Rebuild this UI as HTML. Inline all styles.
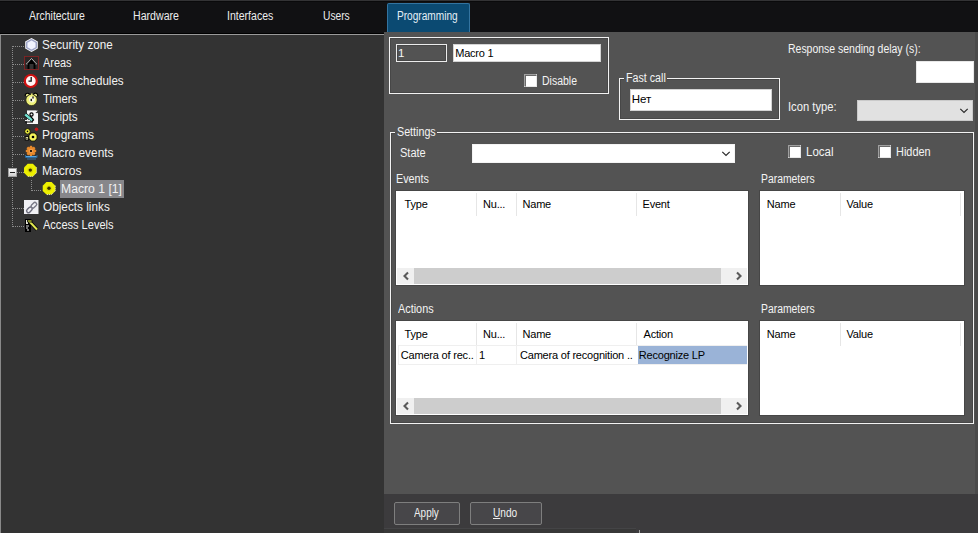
<!DOCTYPE html>
<html><head><meta charset="utf-8">
<style>
*{box-sizing:border-box;margin:0;padding:0}
html,body{width:978px;height:533px;overflow:hidden;background:#111113;font-family:"Liberation Sans",sans-serif;position:relative}
.a{position:absolute}
.t{position:absolute;white-space:nowrap;line-height:1}
.gb{position:absolute;border:1px solid #f2f2f2;box-shadow:inset 0 0 0 1px #474747}
.inp{position:absolute;background:#fff;border:1px solid #d4d4d4}
.list{position:absolute;background:#fff;box-shadow:0 0 0 1px #464646}
.sep{position:absolute;width:1px;background:#e6e6e6}
.gl{position:absolute;background:#efefef}
.dotv{position:absolute;width:1px;background:repeating-linear-gradient(to bottom,#8c8c8c 0 1px,transparent 1px 2px)}
.doth{position:absolute;height:1px;background:repeating-linear-gradient(to right,#8c8c8c 0 1px,transparent 1px 2px)}
.sb{position:absolute;height:16px;background:#f0f0f0}
.th{position:absolute;top:0;height:16px;background:#cdcdcd}
.chk{position:absolute;width:13px;height:13px;background:#fff;border-style:solid;border-width:1px;border-color:#a0a0a0 #fff #fff #a0a0a0}
.chk:after{content:"";position:absolute;left:0;top:0;width:10px;height:10px;border-style:solid;border-width:1px;border-color:#6a6a6a #e8e8e8 #e8e8e8 #6a6a6a}
.btn{position:absolute;border:1px solid #7e7e7e;border-radius:2px;background:#474649}
svg{position:absolute;overflow:visible}
</style></head><body>
<!-- top bar -->
<div class="a" style="left:0;top:0;width:978px;height:1px;background:#333335"></div>
<div class="a" style="left:0;top:1px;width:978px;height:1px;background:#0a0a0b"></div>
<div class="a" style="left:0;top:33px;width:384px;height:1px;background:#000"></div>
<div class="t" style="left:29.00px;top:10px;font-size:12px;color:#ececec;transform:scaleX(0.8734);transform-origin:0 0;">Architecture</div>
<div class="t" style="left:133.12px;top:10px;font-size:12px;color:#ececec;transform:scaleX(0.8843);transform-origin:0 0;">Hardware</div>
<div class="t" style="left:227.42px;top:10px;font-size:12px;color:#ececec;transform:scaleX(0.8788);transform-origin:0 0;">Interfaces</div>
<div class="t" style="left:322.85px;top:10px;font-size:12px;color:#ececec;transform:scaleX(0.8533);transform-origin:0 0;">Users</div>
<div class="a" style="left:387px;top:3px;width:83px;height:30px;background:#0b4a72;border:1px solid #3374a0;border-bottom:none;border-radius:2px 2px 0 0"></div>
<div class="t" style="left:397.46px;top:10px;font-size:12px;color:#e4eef6;transform:scaleX(0.8423);transform-origin:0 0;">Programming</div>

<!-- tree panel -->
<div class="a" style="left:0;top:34px;width:384px;height:499px;background:#333333;border-top:1px solid #9a9a9a;border-left:1px solid #8a8a8a"></div>
<div class="dotv" style="left:12px;top:46px;height:181px"></div>
<div class="doth" style="left:13px;top:46px;width:11px"></div>
<div class="doth" style="left:13px;top:64px;width:11px"></div>
<div class="doth" style="left:13px;top:82px;width:11px"></div>
<div class="doth" style="left:13px;top:100px;width:11px"></div>
<div class="doth" style="left:13px;top:118px;width:11px"></div>
<div class="doth" style="left:13px;top:136px;width:11px"></div>
<div class="doth" style="left:13px;top:154px;width:11px"></div>
<div class="doth" style="left:17px;top:172px;width:7px"></div>
<div class="doth" style="left:13px;top:208px;width:11px"></div>
<div class="doth" style="left:13px;top:226px;width:11px"></div>
<div class="dotv" style="left:31px;top:180px;height:11px"></div>
<div class="doth" style="left:32px;top:190px;width:10px"></div>
<div class="a" style="left:8px;top:168px;width:9px;height:9px;background:linear-gradient(#fafafa,#d0d0d0);border:1px solid #a0a0a0"></div>
<div class="a" style="left:10px;top:172px;width:5px;height:1px;background:#222"></div>
<div class="a" style="left:60px;top:180px;width:64px;height:18px;background:#87878b"></div>
<div class="t" style="left:42.07px;top:39px;font-size:12.5px;color:#f2f2f2;transform:scaleX(0.9333);transform-origin:0 0;">Security zone</div>
<div class="t" style="left:43.00px;top:57px;font-size:12.5px;color:#f2f2f2;transform:scaleX(0.8727);transform-origin:0 0;">Areas</div>
<div class="t" style="left:43.00px;top:75px;font-size:12.5px;color:#f2f2f2;transform:scaleX(0.9264);transform-origin:0 0;">Time schedules</div>
<div class="t" style="left:43.00px;top:93px;font-size:12.5px;color:#f2f2f2;transform:scaleX(0.9079);transform-origin:0 0;">Timers</div>
<div class="t" style="left:42.07px;top:111px;font-size:12.5px;color:#f2f2f2;transform:scaleX(0.9324);transform-origin:0 0;">Scripts</div>
<div class="t" style="left:42.04px;top:129px;font-size:12.5px;color:#f2f2f2;transform:scaleX(0.9585);transform-origin:0 0;">Programs</div>
<div class="t" style="left:42.05px;top:147px;font-size:12.5px;color:#f2f2f2;transform:scaleX(0.9541);transform-origin:0 0;">Macro events</div>
<div class="t" style="left:42.03px;top:165px;font-size:12.5px;color:#f2f2f2;transform:scaleX(0.9650);transform-origin:0 0;">Macros</div>
<div class="t" style="left:61.32px;top:183px;font-size:12.5px;color:#f2f2f2;transform:scaleX(0.9754);transform-origin:0 0;">Macro 1 [1]</div>
<div class="t" style="left:43.00px;top:201px;font-size:12.5px;color:#f2f2f2;transform:scaleX(0.9423);transform-origin:0 0;">Objects links</div>
<div class="t" style="left:43.00px;top:219px;font-size:12.5px;color:#f2f2f2;transform:scaleX(0.8825);transform-origin:0 0;">Access Levels</div>
<!-- icons -->
<svg style="left:24px;top:37px" width="16" height="16" viewBox="0 0 16 16">
 <polygon points="7.5,1 13.8,4.6 13.8,11.4 7.5,15 1.2,11.4 1.2,4.6" fill="#fff"/>
 <polygon points="7.5,2.6 12.3,5.4 12.3,10.6 7.5,13.4 2.7,10.6 2.7,5.4" fill="#f2f4ff" stroke="#a0a6c8" stroke-width="1.5"/>
</svg>
<svg style="left:24px;top:55px" width="16" height="16" viewBox="0 0 16 16">
 <rect x="0.5" y="1.5" width="14" height="13" fill="#2c2828" stroke="#c81c1c" stroke-width="1.1" stroke-dasharray="1 1"/>
 <polygon points="2.5,9 7.5,3.5 12.5,9" fill="#000" stroke="#e8e8e8" stroke-width="0.8"/>
 <rect x="3.5" y="8" width="8" height="6" fill="#000"/>
 <rect x="5.5" y="9" width="4" height="5" fill="#333"/>
</svg>
<svg style="left:24px;top:73px" width="16" height="16" viewBox="0 0 16 16">
 <circle cx="6.8" cy="8" r="6" fill="#fff4f4" stroke="#d01010" stroke-width="2.2"/>
 <path d="M7.2,4 V8.2 H4.5" stroke="#111" stroke-width="1.3" fill="none"/>
</svg>
<svg style="left:24px;top:91px" width="16" height="16" viewBox="0 0 16 16">
 <path d="M1.5,5.5 A2.2,2.2 0 0 1 5.5,3.5" stroke="#000" stroke-width="1.2" fill="#f0f090"/>
 <path d="M9.5,3.5 A2.2,2.2 0 0 1 13.5,5.5" stroke="#000" stroke-width="1.2" fill="#f0f090"/>
 <circle cx="7.5" cy="9" r="5.6" fill="#eef07a" stroke="#1a1a00" stroke-width="0.6"/>
 <circle cx="8" cy="8.5" r="3" fill="#fafadc"/>
 <rect x="7" y="2.5" width="1.6" height="1.6" fill="#e0e070"/>
 <rect x="8.4" y="5.4" width="1.2" height="2.2" fill="#000"/>
 <rect x="6.6" y="7.8" width="1.3" height="2.3" fill="#000"/>
</svg>
<svg style="left:24px;top:109px" width="16" height="16" viewBox="0 0 16 16">
 <rect x="3" y="1.4" width="11" height="13.6" fill="#f6f6f6"/>
 <path d="M12.2,1.5 L14,1.5 L14,3.5 Z" fill="#222"/>
 <path d="M11.8,3.6 H14" stroke="#000" stroke-width="0.8"/>
 <path d="M1.2,5.5 L8.5,11.5" stroke="#000" stroke-width="3.6"/>
 <path d="M1.2,5.5 L8.5,11.5" stroke="#70e0d0" stroke-width="2.4"/>
 <path d="M1,11.6 H6" stroke="#f0f0f0" stroke-width="1.2"/>
 <path d="M1,13 H9" stroke="#000" stroke-width="1"/>
 <circle cx="7.5" cy="5.5" r="1.6" fill="#f6f6f6" stroke="#000" stroke-width="1.2"/>
 <path d="M6.5,7 L9.5,11 L8,12.5" stroke="#000" stroke-width="1.2" fill="none"/>
</svg>
<svg style="left:24px;top:127px" width="16" height="16" viewBox="0 0 16 16">
 <circle cx="12.5" cy="2.2" r="1.7" fill="#c81818"/>
 <circle cx="3.5" cy="4.4" r="2.8" fill="#f0f040" stroke="#000" stroke-width="0.9"/>
 <circle cx="3.5" cy="4.4" r="0.8" fill="#000"/>
 <circle cx="9" cy="10" r="4.2" fill="#f4f45a" stroke="#000" stroke-width="0.9"/>
 <circle cx="9" cy="10" r="1.3" fill="#000"/>
 <rect x="1.2" y="9.6" width="3.4" height="3.4" fill="#f0f0b0" stroke="#000" stroke-width="0.9"/>
 <circle cx="2.9" cy="11.3" r="0.6" fill="#000"/>
</svg>
<svg style="left:24px;top:145px" width="16" height="16" viewBox="0 0 16 16">
 <g fill="#e8892a">
  <circle cx="7" cy="6" r="4"/>
  <rect x="5.8" y="0.8" width="2.4" height="10.4"/>
  <rect x="1.8" y="4.8" width="10.4" height="2.4"/>
  <rect x="5.8" y="0.8" width="2.4" height="10.4" transform="rotate(45 7 6)"/>
  <rect x="5.8" y="0.8" width="2.4" height="10.4" transform="rotate(-45 7 6)"/>
 </g>
 <circle cx="7" cy="6" r="2.2" fill="#f0a050"/>
 <circle cx="7" cy="6" r="1.1" fill="#000"/>
 <path d="M1.5,10 V12.5 H13 V10" stroke="#2a6aa0" stroke-width="1" fill="none"/>
 <path d="M2,11.5 H12.5" stroke="#5aa8e0" stroke-width="1"/>
 <path d="M3,14 H12" stroke="#3a80b8" stroke-width="0.8"/>
</svg>
<svg style="left:24px;top:163px" width="16" height="16" viewBox="0 0 16 16">
 <polygon points="12.58,9.70 8.90,13.38 3.70,13.38 0.02,9.70 0.02,4.50 3.70,0.82 8.90,0.82 12.58,4.50" fill="#eef000"/>
 <path d="M12.56,4.52 L12.56,9.68 L8.88,13.36 L3.72,13.36" stroke="#e8e8d0" stroke-width="1" stroke-dasharray="1 1" fill="none"/>
 <circle cx="6.3" cy="7.1" r="2.9" fill="#e0dc00"/>
 <circle cx="6.3" cy="7.1" r="1.7" fill="#3a3200"/>
</svg>
<svg style="left:42px;top:181px" width="16" height="16" viewBox="0 0 16 16">
 <polygon points="13.28,9.90 9.60,13.58 4.40,13.58 0.72,9.90 0.72,4.70 4.40,1.02 9.60,1.02 13.28,4.70" fill="#eef000"/>
 <path d="M13.26,4.72 L13.26,9.88 L9.58,13.56 L4.42,13.56" stroke="#e8e8d0" stroke-width="1" stroke-dasharray="1 1" fill="none"/>
 <circle cx="7.0" cy="7.3" r="2.9" fill="#e0dc00"/>
 <circle cx="7.0" cy="7.3" r="1.7" fill="#3a3200"/>
</svg>
<svg style="left:24px;top:199px" width="16" height="16" viewBox="0 0 16 16">
 <rect x="0" y="1" width="14.5" height="14" fill="#f0f0f4"/>
 <rect x="2.2" y="9" width="6.5" height="3.6" rx="1.8" transform="rotate(-45 5.5 10.8)" fill="none" stroke="#6c6c7c" stroke-width="1.4"/>
 <rect x="6.6" y="4.4" width="6.5" height="3.6" rx="1.8" transform="rotate(-45 9.9 6.2)" fill="none" stroke="#7a7a88" stroke-width="1.4"/>
</svg>
<svg style="left:24px;top:217px" width="16" height="16" viewBox="0 0 16 16">
 <rect x="1" y="2" width="6" height="13" fill="#000"/>
 <rect x="2" y="3" width="2" height="4" fill="#e8e8d8"/>
 <path d="M2,9 H5 M2,11 H4 M3,13 H5" stroke="#e0e0e0" stroke-width="1.2"/>
 <path d="M5,4 L13,12.5" stroke="#000" stroke-width="3.4"/>
 <path d="M5,4 L13,12.5" stroke="#e0e850" stroke-width="2"/>
 <path d="M3.5,3 H8 V5 H3.5 Z" fill="#d8e040" stroke="#000" stroke-width="0.8"/>
</svg>

<!-- right panel -->
<div class="a" style="left:384px;top:32px;width:594px;height:462px;background:#535353"></div>
<div class="a" style="left:975px;top:32px;width:3px;height:462px;background:#4a4a4a"></div>
<div class="a" style="left:384px;top:494px;width:594px;height:39px;background:#3c3b3d"></div>
<div class="a" style="left:384px;top:528px;width:252px;height:1px;background:#444446"></div>
<div class="a" style="left:384px;top:529px;width:252px;height:4px;background:#383838"></div>
<div class="a" style="left:639px;top:530px;width:1px;height:3px;background:#a0a0a0"></div>

<!-- group 1 -->
<div class="gb" style="left:389px;top:37px;width:220px;height:57px"></div>
<div class="a" style="left:396px;top:44px;width:51px;height:18px;border:1px solid #ececec;background:#535353;box-shadow:inset 0 0 0 1px #474747"></div>
<div class="inp" style="left:453px;top:44px;width:148px;height:18px"></div>
<div class="chk" style="left:524px;top:74px"></div>

<!-- fast call -->
<div class="gb" style="left:619px;top:78px;width:161px;height:42px"></div>
<div class="a" style="left:624px;top:72px;width:43px;height:10px;background:#535353"></div>
<div class="inp" style="left:630px;top:89px;width:142px;height:22px"></div>

<div class="inp" style="left:916px;top:61px;width:58px;height:22px;border-color:#e8e8e8"></div>
<div class="a" style="left:857px;top:100px;width:116px;height:21px;background:#e1e1e1;border:1px solid #cacaca"></div>
<svg style="left:960px;top:108px" width="8" height="5" viewBox="0 0 8 5"><path d="M0.3,0.8 L4,4.5 L7.7,0.8" stroke="#2a2a2a" stroke-width="1.2" fill="none"/></svg>

<!-- settings -->
<div class="gb" style="left:390px;top:132px;width:584px;height:292px"></div>
<div class="a" style="left:395px;top:126px;width:42px;height:10px;background:#535353"></div>
<div class="inp" style="left:472px;top:144px;width:263px;height:19px;border-color:#f4f4f4"></div>
<svg style="left:722px;top:151px" width="8" height="5" viewBox="0 0 8 5"><path d="M0.3,0.8 L4,4.5 L7.7,0.8" stroke="#2a2a2a" stroke-width="1.2" fill="none"/></svg>
<div class="chk" style="left:788px;top:145px"></div>
<div class="chk" style="left:878px;top:145px"></div>

<!-- events -->
<div class="list" style="left:396px;top:191px;width:352px;height:94px">
  <div class="sep" style="left:80px;top:2px;height:23px"></div>
  <div class="sep" style="left:120px;top:2px;height:23px"></div>
  <div class="sep" style="left:240px;top:2px;height:23px"></div>
  <div class="sb" style="left:1px;top:77px;width:350px">
    <div class="th" style="left:17px;width:307px"></div>
    <svg style="left:6px;top:4px" width="6" height="8" viewBox="0 0 6 8"><path d="M5,0.5 L1.5,4 L5,7.5" stroke="#5a5a5a" stroke-width="2.1" fill="none"/></svg>
    <svg style="left:339px;top:4px" width="6" height="8" viewBox="0 0 6 8"><path d="M1,0.5 L4.5,4 L1,7.5" stroke="#5a5a5a" stroke-width="2.1" fill="none"/></svg>
  </div>
</div>
<div class="list" style="left:760px;top:191px;width:204px;height:94px">
  <div class="sep" style="left:80px;top:2px;height:23px"></div>
  <div class="sep" style="left:200px;top:2px;height:23px"></div>
</div>

<!-- actions -->
<div class="list" style="left:396px;top:321px;width:352px;height:94px">
  <div class="sep" style="left:80px;top:2px;height:23px"></div>
  <div class="sep" style="left:120px;top:2px;height:23px"></div>
  <div class="sep" style="left:240px;top:2px;height:23px"></div>
  <div class="gl" style="left:2px;top:24px;width:349px;height:1px"></div>
  <div class="gl" style="left:2px;top:43px;width:349px;height:1px"></div>
  <div class="gl" style="left:2px;top:24px;width:1px;height:20px"></div>
  <div class="gl" style="left:80px;top:24px;width:1px;height:20px"></div>
  <div class="gl" style="left:120px;top:24px;width:1px;height:20px"></div>
  <div class="a" style="left:242px;top:25px;width:109px;height:18px;background:#9ab3d7"></div>
  <div class="sb" style="left:1px;top:77px;width:350px">
    <div class="th" style="left:17px;width:307px"></div>
    <svg style="left:6px;top:4px" width="6" height="8" viewBox="0 0 6 8"><path d="M5,0.5 L1.5,4 L5,7.5" stroke="#5a5a5a" stroke-width="2.1" fill="none"/></svg>
    <svg style="left:339px;top:4px" width="6" height="8" viewBox="0 0 6 8"><path d="M1,0.5 L4.5,4 L1,7.5" stroke="#5a5a5a" stroke-width="2.1" fill="none"/></svg>
  </div>
</div>
<div class="list" style="left:760px;top:321px;width:204px;height:94px">
  <div class="sep" style="left:80px;top:2px;height:23px"></div>
  <div class="sep" style="left:200px;top:2px;height:23px"></div>
</div>
<div class="t" style="left:398.00px;top:48px;font-size:11.5px;color:#f6f6f6;">1</div>
<div class="t" style="left:455.20px;top:48px;font-size:11px;color:#000;letter-spacing:-0.2px;">Macro 1</div>
<div class="t" style="left:542.13px;top:75px;font-size:12px;color:#f4f4f4;transform:scaleX(0.8744);transform-origin:0 0;">Disable</div>
<div class="t" style="left:625.81px;top:72px;font-size:12px;color:#f4f4f4;transform:scaleX(0.8907);transform-origin:0 0;">Fast call</div>
<div class="t" style="left:631.70px;top:94px;font-size:11.5px;color:#000;">Нет</div>
<div class="t" style="left:788.13px;top:43px;font-size:12px;color:#f4f4f4;transform:scaleX(0.8720);transform-origin:0 0;">Response sending delay (s):</div>
<div class="t" style="left:788.07px;top:101px;font-size:12px;color:#f4f4f4;transform:scaleX(0.9340);transform-origin:0 0;">Icon type:</div>
<div class="t" style="left:397.11px;top:126px;font-size:12px;color:#f4f4f4;transform:scaleX(0.8929);transform-origin:0 0;">Settings</div>
<div class="t" style="left:400.38px;top:147px;font-size:12px;color:#f4f4f4;transform:scaleX(0.9185);transform-origin:0 0;">State</div>
<div class="t" style="left:805.54px;top:146px;font-size:12px;color:#f4f4f4;transform:scaleX(0.9593);transform-origin:0 0;">Local</div>
<div class="t" style="left:895.59px;top:146px;font-size:12px;color:#f4f4f4;transform:scaleX(0.9108);transform-origin:0 0;">Hidden</div>
<div class="t" style="left:395.70px;top:173px;font-size:12px;color:#f4f4f4;transform:scaleX(0.8972);transform-origin:0 0;">Events</div>
<div class="t" style="left:760.74px;top:173px;font-size:12px;color:#f4f4f4;transform:scaleX(0.8639);transform-origin:0 0;">Parameters</div>
<div class="t" style="left:397.90px;top:303px;font-size:12px;color:#f4f4f4;transform:scaleX(0.9051);transform-origin:0 0;">Actions</div>
<div class="t" style="left:760.74px;top:303px;font-size:12px;color:#f4f4f4;transform:scaleX(0.8639);transform-origin:0 0;">Parameters</div>
<div class="t" style="left:404.50px;top:199px;font-size:11px;color:#000;letter-spacing:-0.2px;">Type</div>
<div class="t" style="left:483.00px;top:199px;font-size:11px;color:#000;letter-spacing:-0.2px;">Nu...</div>
<div class="t" style="left:522.50px;top:199px;font-size:11px;color:#000;letter-spacing:-0.2px;">Name</div>
<div class="t" style="left:642.50px;top:199px;font-size:11px;color:#000;letter-spacing:-0.2px;">Event</div>
<div class="t" style="left:766.80px;top:199px;font-size:11px;color:#000;letter-spacing:-0.2px;">Name</div>
<div class="t" style="left:846.50px;top:199px;font-size:11px;color:#000;letter-spacing:-0.2px;">Value</div>
<div class="t" style="left:404.50px;top:329px;font-size:11px;color:#000;letter-spacing:-0.2px;">Type</div>
<div class="t" style="left:483.00px;top:329px;font-size:11px;color:#000;letter-spacing:-0.2px;">Nu...</div>
<div class="t" style="left:522.50px;top:329px;font-size:11px;color:#000;letter-spacing:-0.2px;">Name</div>
<div class="t" style="left:643.50px;top:329px;font-size:11px;color:#000;letter-spacing:-0.2px;">Action</div>
<div class="t" style="left:766.80px;top:329px;font-size:11px;color:#000;letter-spacing:-0.2px;">Name</div>
<div class="t" style="left:846.50px;top:329px;font-size:11px;color:#000;letter-spacing:-0.2px;">Value</div>
<div class="t" style="left:400.80px;top:350px;font-size:11px;color:#000;letter-spacing:-0.2px;">Camera of rec..</div>
<div class="t" style="left:479.00px;top:350px;font-size:11px;color:#000;letter-spacing:-0.2px;">1</div>
<div class="t" style="left:520.00px;top:350px;font-size:11px;color:#000;letter-spacing:-0.2px;">Camera of recognition ..</div>
<div class="t" style="left:638.80px;top:350px;font-size:11px;color:#000;letter-spacing:-0.2px;">Recognize LP</div>
<!-- buttons -->
<div class="btn" style="left:394px;top:502px;width:66px;height:23px"></div>
<div class="btn" style="left:470px;top:502px;width:72px;height:23px"></div>
<div class="t" style="left:414.20px;top:507px;font-size:12px;color:#f0f0f0;transform:scaleX(0.8267);transform-origin:0 0;">Apply</div>
<div class="t" style="left:493.40px;top:507px;font-size:12px;color:#f0f0f0;transform:scaleX(0.8448);transform-origin:0 0;"><u style="text-underline-offset:1px">U</u>ndo</div>
</body></html>
